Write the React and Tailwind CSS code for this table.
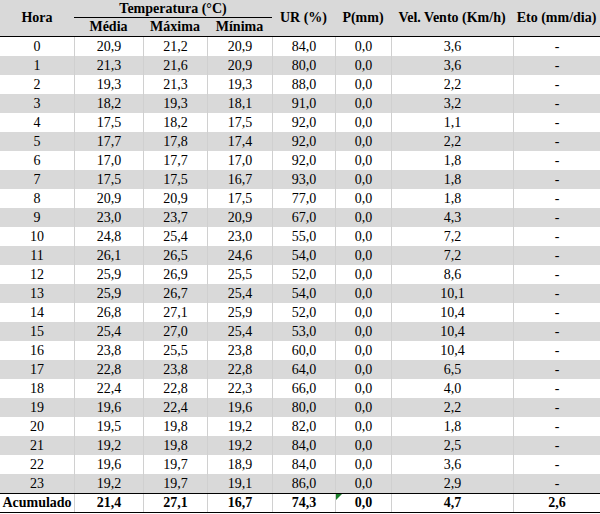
import React from "react";

const rows = [
  ["0", "20,9", "21,2", "20,9", "84,0", "0,0", "3,6", "-"],
  ["1", "21,3", "21,6", "20,9", "80,0", "0,0", "3,6", "-"],
  ["2", "19,3", "21,3", "19,3", "88,0", "0,0", "2,2", "-"],
  ["3", "18,2", "19,3", "18,1", "91,0", "0,0", "3,2", "-"],
  ["4", "17,5", "18,2", "17,5", "92,0", "0,0", "1,1", "-"],
  ["5", "17,7", "17,8", "17,4", "92,0", "0,0", "2,2", "-"],
  ["6", "17,0", "17,7", "17,0", "92,0", "0,0", "1,8", "-"],
  ["7", "17,5", "17,5", "16,7", "93,0", "0,0", "1,8", "-"],
  ["8", "20,9", "20,9", "17,5", "77,0", "0,0", "1,8", "-"],
  ["9", "23,0", "23,7", "20,9", "67,0", "0,0", "4,3", "-"],
  ["10", "24,8", "25,4", "23,0", "55,0", "0,0", "7,2", "-"],
  ["11", "26,1", "26,5", "24,6", "54,0", "0,0", "7,2", "-"],
  ["12", "25,9", "26,9", "25,5", "52,0", "0,0", "8,6", "-"],
  ["13", "25,9", "26,7", "25,4", "54,0", "0,0", "10,1", "-"],
  ["14", "26,8", "27,1", "25,9", "52,0", "0,0", "10,4", "-"],
  ["15", "25,4", "27,0", "25,4", "53,0", "0,0", "10,4", "-"],
  ["16", "23,8", "25,5", "23,8", "60,0", "0,0", "10,4", "-"],
  ["17", "22,8", "23,8", "22,8", "64,0", "0,0", "6,5", "-"],
  ["18", "22,4", "22,8", "22,3", "66,0", "0,0", "4,0", "-"],
  ["19", "19,6", "22,4", "19,6", "80,0", "0,0", "2,2", "-"],
  ["20", "19,5", "19,8", "19,2", "82,0", "0,0", "1,8", "-"],
  ["21", "19,2", "19,8", "19,2", "84,0", "0,0", "2,5", "-"],
  ["22", "19,6", "19,7", "18,9", "84,0", "0,0", "3,6", "-"],
  ["23", "19,2", "19,7", "19,1", "86,0", "0,0", "2,9", "-"],
];

const total = ["Acumulado", "21,4", "27,1", "16,7", "74,3", "0,0", "4,7", "2,6"];

const gridCols = "grid grid-cols-[74px_69px_64px_65px_63px_56px_122px_87px]";

export default function App() {
  return (
    <div
      className="w-[600px] h-[514px] bg-white text-black text-[14px] leading-none"
      style={{ fontFamily: '"Liberation Serif", "Times New Roman", serif' }}
    >
      {/* Header */}
      <div className="flex h-[37px] bg-[#d9d9d9] border-b border-black font-bold">
        <div className="w-[74px] flex items-center justify-center">Hora</div>
        <div className="w-[198px] flex flex-col">
          <div className="h-[18px] flex items-center justify-center border-b border-black">
            Temperatura (°C)
          </div>
          <div className="flex flex-1">
            <div className="w-[69px] flex items-center justify-center">Média</div>
            <div className="w-[64px] flex items-center justify-center">Máxima</div>
            <div className="w-[65px] flex items-center justify-center">Mínima</div>
          </div>
        </div>
        <div className="w-[63px] flex items-center justify-center">UR (%)</div>
        <div className="w-[56px] flex items-center justify-center">P(mm)</div>
        <div className="w-[122px] flex items-center justify-center">Vel. Vento (Km/h)</div>
        <div className="w-[87px] flex items-center justify-center">Eto (mm/dia)</div>
      </div>

      {/* Body */}
      {rows.map((r, i) => (
        <div
          key={i}
          className={`${gridCols} h-[19px] ${i % 2 === 1 ? "bg-[#d9d9d9]" : "bg-white"}`}
        >
          {r.map((c, j) => (
            <div
              key={j}
              className={`flex items-center justify-center ${j > 0 ? "border-l border-[#d0d0d0]" : ""}`}
            >
              {c}
            </div>
          ))}
        </div>
      ))}

      {/* Total */}
      <div className={`${gridCols} h-[20px] border-y border-black font-bold bg-white`}>
        {total.map((c, j) => (
          <div
            key={j}
            className={`relative flex items-center justify-center ${j > 0 ? "border-l border-[#d0d0d0]" : ""}`}
          >
            {j === 5 && (
              <svg className="absolute left-0 top-0" width="6" height="6" viewBox="0 0 6 6">
                <polygon points="0,0 6,0 0,6" fill="#1a7f2a" />
              </svg>
            )}
            {c}
          </div>
        ))}
      </div>
    </div>
  );
}
